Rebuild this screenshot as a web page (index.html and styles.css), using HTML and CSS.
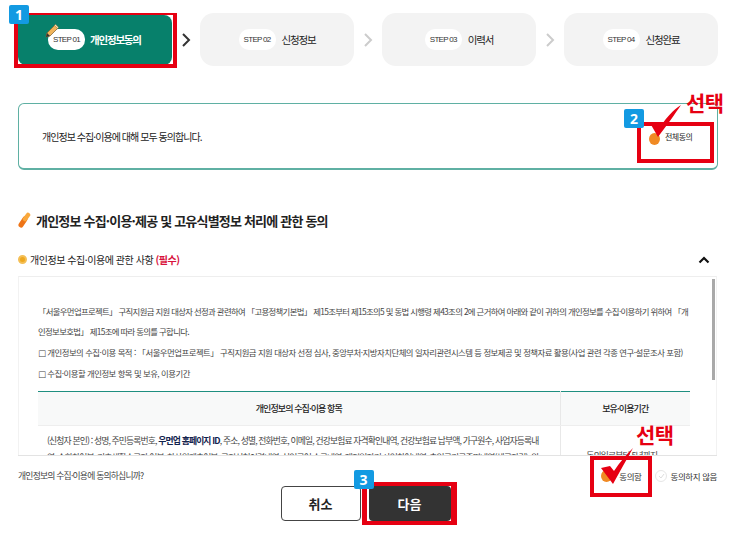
FILE: index.html
```html
<!DOCTYPE html>
<html lang="ko">
<head>
<meta charset="utf-8">
<title>개인정보 동의</title>
<link rel="stylesheet" href="styles.css">
</head>
<body>
<main class="page">
  <nav class="steps">
    <div class="step step-active">
      <span class="badge badge-1">1</span>
      <svg class="pencil" width="15" height="16" viewBox="0 0 15 16"><path d="M2 10 10 2l3 3-8 8-4 1z" fill="#f0b45a" stroke="#8a6a35" stroke-width=".8"/><path d="M1 14l1-4 3 3z" fill="#333"/><path d="M9.5 2.5l3 3 1-1.2-3-3z" fill="#f7e3b5" stroke="#8a6a35" stroke-width=".5"/></svg>
      <span class="pill">STEP 01</span><span class="step-name">개인정보동의</span>
    </div>
    <svg class="arrow" width="10" height="16" viewBox="0 0 10 16"><path d="M2 2l6 6-6 6" fill="none" stroke="#333" stroke-width="2"/></svg>
    <div class="step"><span class="pill">STEP 02</span><span class="step-name">신청정보</span></div>
    <svg class="arrow" width="10" height="16" viewBox="0 0 10 16"><path d="M2 2l6 6-6 6" fill="none" stroke="#ccc" stroke-width="2"/></svg>
    <div class="step"><span class="pill">STEP 03</span><span class="step-name">이력서</span></div>
    <svg class="arrow" width="10" height="16" viewBox="0 0 10 16"><path d="M2 2l6 6-6 6" fill="none" stroke="#ccc" stroke-width="2"/></svg>
    <div class="step"><span class="pill">STEP 04</span><span class="step-name">신청완료</span></div>
  </nav>

  <section class="all-agree">
    <p class="all-text">개인정보 수집·이용에 대해 모두 동의합니다.</p>
    <span class="all-label">전체동의</span>
    <span class="mark-box mark-box-2"></span>
    <span class="dot dot-2"></span>
    <span class="badge badge-2">2</span>
    <svg class="check check-2" width="34" height="34" viewBox="0 0 34 34"><path d="M1 19l8-1 3 4C17 14 24 6 32 1 26 10 18 21 9 33z" fill="#e60012"/></svg>
    <strong class="select-label select-2">선택</strong>
  </section>

  <h2 class="title">
    <svg width="13" height="16" viewBox="0 0 13 16"><path d="M3 13 7 7" fill="none" stroke="#ee7417" stroke-width="5" stroke-linecap="round"/><path d="M7 7 10 3" fill="none" stroke="#f9a83c" stroke-width="4.5" stroke-linecap="round"/></svg>
    개인정보 수집·이용·제공 및 고유식별정보 처리에 관한 동의
  </h2>

  <div class="sub-row">
    <span class="coin"></span>
    <h3 class="sub-title">개인정보 수집·이용에 관한 사항 <em>(필수)</em></h3>
    <svg class="chevron" width="12" height="8" viewBox="0 0 12 8"><path d="M1.5 6.5 6 2l4.5 4.5" fill="none" stroke="#111" stroke-width="2.2"/></svg>
  </div>

  <div class="terms">
    <div class="terms-body">
      <p class="lead">「서울우먼업프로젝트」 구직지원금 지원 대상자 선정과 관련하여 「고용정책기본법」 제15조부터 제15조의5 및 동법 시행령 제43조의 2에 근거하여 아래와 같이 귀하의 개인정보를 수집·이용하기 위하여 「개인정보보호법」 제15조에 따라 동의를 구합니다.</p>
      <p><span class="sq">□</span> 개인정보의 수집·이용 목적 : 「서울우먼업프로젝트」 구직지원금 지원 대상자 선정 심사, 중앙부처·지방자치단체의 일자리관련시스템 등 정보제공 및 정책자료 활용(사업 관련 각종 연구·설문조사 포함)</p>
      <p><span class="sq">□</span> 수집·이용할 개인정보 항목 및 보유, 이용기간</p>
      <table class="info-table">
        <thead><tr><th>개인정보의 수집·이용 항목</th><th class="col-period">보유·이용기간</th></tr></thead>
        <tbody><tr>
          <td>(신청자 본인) : 성명, 주민등록번호, <b>우먼업 홈페이지 ID</b>, 주소, 성별, 전화번호, 이메일, 건강보험료 자격확인내역, 건강보험료 납부액, 가구원수, 사업자등록내역, 승합차여부, 기초생활수급자 여부, 차상위계층여부, 구직신청이력내역, 실업급여 수급내역, 재정일자리 사업참여내역, 출입국기록증명내역(체류자격), 외국인등록</td>
          <td class="col-period cell-period">동의일로부터 5년까지</td>
        </tr></tbody>
      </table>
    </div>
    <span class="scrollbar"></span>
  </div>

  <div class="ask-row">
    <p class="ask">개인정보의 수집·이용에 동의하십니까?</p>
    <label class="opt opt-yes"><span class="dot"></span>동의함</label>
    <label class="opt opt-no"><span class="radio-off"><svg width="7" height="6" viewBox="0 0 7 6"><path d="M1 3l2 2 3-4" fill="none" stroke="#ddd"/></svg></span>동의하지 않음</label>
    <span class="mark-box mark-box-3"></span>
    <svg class="check check-3" width="34" height="38" viewBox="0 0 34 38"><path d="M0 21l9-2 4 5C19 15 25 8 32 1 26 12 19 24 12 37z" fill="#e60012"/></svg>
    <strong class="select-label select-3">선택</strong>
  </div>

  <div class="buttons">
    <button class="btn btn-cancel" type="button">취소</button>
    <div class="next-wrap">
      <span class="badge badge-3">3</span>
      <button class="btn btn-next" type="button">다음</button>
    </div>
  </div>
</main>
</body>
</html>
```
FILE: styles.css
```css
* { box-sizing: border-box; }
html, body { margin: 0; padding: 0; }
body {
  width: 741px;
  height: 543px;
  overflow: hidden;
  background: #fff;
  color: #222;
  font-family: "Noto Sans CJK KR", "Noto Sans", sans-serif;
}
p, h2, h3 { margin: 0; }
.page { position: relative; padding: 13px 23px 0 18px; }

.steps { display: flex; align-items: center; justify-content: space-between; height: 53px; }
.step {
  position: relative;
  width: 154px;
  height: 53px;
  display: flex;
  align-items: center;
  justify-content: center;
  gap: 6px;
  background: #f3f3f3;
  border-radius: 14px;
  font-size: 10.5px;
  letter-spacing: -1.2px;
  color: #222;
}
.step-active {
  background: #07806b;
  color: #fff;
  font-weight: 700;
  height: 50px;
  border-radius: 8px;
  justify-content: flex-start;
  padding-left: 30px;
  gap: 5px;
}
.step-active::after {
  content: "";
  position: absolute;
  left: -4px;
  right: -5px;
  top: -2px;
  bottom: -3px;
  border: solid #e60012;
  border-width: 2px 4px 4px 4px;
}
.pill {
  width: 37px;
  flex: none;
  background: #fff;
  color: #333;
  border-radius: 10px;
  height: 21px;
  line-height: 21px;
  text-align: center;
  font-family: "Liberation Sans", sans-serif;
  font-size: 8px;
  font-weight: 400;
  letter-spacing: -.7px;
}
.pencil { position: absolute; left: 27px; top: 8px; z-index: 1; }
.arrow { flex: none; }

.badge {
  position: absolute;
  z-index: 3;
  width: 20px;
  height: 19px;
  background: #139ae2;
  color: #fff;
  border-radius: 2px;
  text-align: center;
  letter-spacing: 0;
  font: 700 14px/19px "Open Sans", sans-serif;
}
.badge-1 { left: -9px; top: -10px; }
.badge-2 { left: 605px; top: 5px; }
.badge-3 { left: -15px; top: -16px; }

.all-agree {
  position: relative;
  margin-top: 37px;
  width: 700px;
  height: 67px;
  border: 1px solid #5fb0a3;
  border-bottom-width: 2px;
  border-radius: 6px;
  display: flex;
  align-items: center;
  padding-left: 23px;
}
.all-text { font-size: 10px; letter-spacing: -.95px; color: #222; }
.all-label { position: absolute; left: 646px; top: 27px; font-size: 8px; letter-spacing: -.5px; color: #222; }
.mark-box { position: absolute; border: 4px solid #e60012; z-index: 1; }
.mark-box-2 { left: 618px; top: 18px; width: 77px; height: 41px; }
.dot { display: inline-block; width: 11px; height: 12px; border-radius: 50%; background: #f08a24; }
.dot-2 { position: absolute; left: 630px; top: 29px; }
.check { position: absolute; z-index: 2; }
.check-2 { left: 630px; top: 0; }
.select-label {
  position: absolute;
  z-index: 2;
  white-space: nowrap;
  color: #e60012;
  font-size: 21px;
  font-weight: 700;
  line-height: 26px;
  letter-spacing: -.5px;
}
.select-2 { left: 667px; top: -15px; }

.title {
  margin-top: 40px;
  display: flex;
  align-items: center;
  gap: 5px;
  height: 20px;
  font-size: 13px;
  font-weight: 700;
  letter-spacing: -.8px;
  color: #222;
}
.sub-row { display: flex; align-items: center; gap: 3px; margin-top: 20px; height: 19px; padding-right: 8px; }
.coin { width: 9px; height: 9px; border-radius: 50%; background: #eda71f; border: 2px solid #f4bf56; }
.sub-title { flex: 1; font-size: 10px; font-weight: 400; letter-spacing: -.45px; color: #222; }
.sub-title em { font-style: normal; font-weight: 700; color: #d8123c; }

.terms {
  position: relative;
  margin-top: 7px;
  width: 699px;
  height: 180px;
  overflow: hidden;
  border-top: 1px solid #eee;
  border-left: 1px solid #f2f2f2;
  border-right: 1px solid #f2f2f2;
}
.terms-body { padding: 24px 27px 0 19px; font-size: 8.4px; line-height: 20.3px; letter-spacing: -.5px; color: #444; }
.lead { letter-spacing: -.66px; }
.sq { font-family: "DejaVu Sans", sans-serif; color: #444; }
.scrollbar { position: absolute; right: 1px; top: 2px; width: 3px; height: 101px; background: #a9a9a9; }

.info-table { width: 652px; margin-top: 7px; border-collapse: collapse; border-top: 1px solid #1f8f80; table-layout: fixed; }
.info-table th { height: 34px; background: #f8f9f9; font-size: 9px; font-weight: 500; color: #222; border-bottom: 1px solid #eee; letter-spacing: -.9px; }
.info-table td { padding: 6px 16px 0 9px; font-size: 8.8px; line-height: 17px; vertical-align: top; text-align: left; color: #444; letter-spacing: -.85px; }
.info-table b { color: #12224d; font-weight: 700; }
.col-period { width: 130px; border-left: 1px solid #e8e8e8; text-align: center !important; }
.info-table .cell-period { padding-top: 21px; }

.ask-row {
  position: relative;
  height: 34px;
  display: flex;
  align-items: center;
  gap: 14px;
  width: 699px;
  padding-top: 6px;
  border-top: 1px solid #e3e3e3;
  margin-top: -1px;
  font-size: 8.5px;
  letter-spacing: -.4px;
  color: #333;
}
.ask { flex: 1; font-size: 8.8px; letter-spacing: -.78px; color: #444; }
.opt { display: flex; align-items: center; }
.opt-yes { gap: 7px; }
.opt-no { gap: 3px; }
.radio-off { width: 12px; height: 12px; border-radius: 50%; border: 1px solid #e6e6e6; display: flex; align-items: center; justify-content: center; }
.mark-box-3 { left: 572px; top: 0; width: 62px; height: 41px; }
.check-3 { left: 583px; top: -9px; }
.select-3 { left: 618px; top: -35px; }

.buttons { display: flex; justify-content: center; gap: 8px; margin-top: -3px; padding-right: 5px; }
.btn {
  width: 80px;
  height: 35px;
  border-radius: 4px;
  font-family: "Noto Sans CJK KR", sans-serif;
  font-size: 13px;
  font-weight: 700;
  padding: 0;
}
.btn-cancel { background: #fff; border: 1px solid #444; color: #222; }
.next-wrap { position: relative; display: flex; }
.next-wrap::after {
  content: "";
  position: absolute;
  left: -7px;
  right: -6px;
  top: -4px;
  bottom: -4px;
  border: solid #e60012;
  border-width: 4px 6px 4px 5px;
}
.btn-next { width: 82px; background: #333; border: 0; color: #fff; }
```
